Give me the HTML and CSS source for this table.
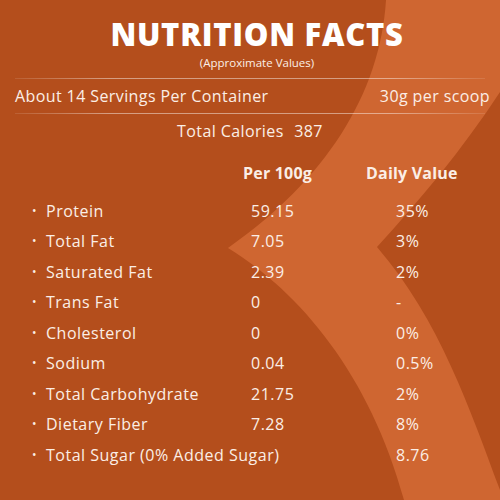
FILE: index.html
```html
<!DOCTYPE html>
<html lang="en">
<head>
    <meta charset="UTF-8">
    <meta name="viewport" content="width=device-width, initial-scale=1.0">
    <title>Nutrition Facts</title>
    <link rel="stylesheet" href="styles.css">
</head>
<body>
    <div class="card">
        <svg class="bg" width="500" height="500" viewBox="0 0 500 500">
            <path d="M386,0 C380,95 325,180 228,248 C300,292 370,375 404,500 L500,500 L500,490 C470,410 440,320 377,247 C420,200 462,150 500,92 L500,0 Z" fill="#cf6631"/>
        </svg>

        <div class="content">
            <div class="heading">
                <h1>NUTRITION FACTS</h1>
                <p class="subtitle">(Approximate Values)</p>
            </div>

            <div class="divider"></div>
            <div class="servings">
                <span>About 14 Servings Per Container</span>
                <span>30g per scoop</span>
            </div>
            <div class="divider short"></div>

            <p class="calories">Total Calories <span class="kcal">387</span></p>

            <div class="facts">
                <div class="head"></div>
                <div class="head">Per 100g</div>
                <div class="head dv">Daily Value</div>

                <div class="name">Protein</div><div>59.15</div><div>35%</div>
                <div class="name">Total Fat</div><div>7.05</div><div>3%</div>
                <div class="name">Saturated Fat</div><div>2.39</div><div>2%</div>
                <div class="name">Trans Fat</div><div>0</div><div>-</div>
                <div class="name">Cholesterol</div><div>0</div><div>0%</div>
                <div class="name">Sodium</div><div>0.04</div><div>0.5%</div>
                <div class="name">Total Carbohydrate</div><div>21.75</div><div>2%</div>
                <div class="name">Dietary Fiber</div><div>7.28</div><div>8%</div>
                <div class="name wide">Total Sugar (0% Added Sugar)</div><div>8.76</div>
            </div>
        </div>
    </div>
</body>
</html>
```

FILE: styles.css
```css
body {
    margin: 0;
    font-family: 'Open Sans', 'Noto Sans', sans-serif;
    color: #fbeee6;
}
.card {
    position: relative;
    width: 500px;
    height: 500px;
    overflow: hidden;
    background-color: #b44e1c; /* тёмный оранжевый фон */
}
.bg {
    position: absolute;
    top: 0;
    left: 0;
}
.content {
    position: relative;
    padding-top: 13px;
}
.heading {
    padding-left: 14px;
}
h1 {
    margin: 0;
    text-align: center;
    font-size: 31px;
    line-height: 42px;
    font-weight: 800;
    letter-spacing: 0.7px;
    color: #ffffff;
}
.subtitle {
    margin: 0;
    text-align: center;
    font-size: 11.5px;
    line-height: 15px;
}
.divider {
    height: 1px;
    margin: 8px 15px 0 15px;
    background: linear-gradient(to right, rgba(255,255,255,0.1), rgba(255,255,255,0.45) 20%, rgba(255,255,255,0.45) 80%, rgba(255,255,255,0.1));
}
.divider.short {
    margin: 0 15px 0 15px;
}
.servings {
    display: flex;
    justify-content: space-between;
    padding: 0 10px 0 15px;
    font-size: 16px;
    line-height: 34px;
    letter-spacing: 0.4px;
}
.calories {
    margin: 0;
    text-align: center;
    font-size: 16px;
    line-height: 34px;
    letter-spacing: 0.4px;
}
.kcal {
    margin-left: 6px;
}
.facts {
    display: grid;
    grid-template-columns: 205px 145px 1fr;
    padding-left: 46px;
    margin-top: 10px;
    font-size: 16px;
    line-height: 30.5px;
    letter-spacing: 0.5px;
}
.head {
    font-weight: 700;
    letter-spacing: 0.2px;
    margin-left: -8px;
    margin-bottom: 7px;
}
.head.dv {
    margin-left: -30px;
}
.name {
    position: relative;
}
.name::before {
    content: "•";
    position: absolute;
    left: -14px;
    font-size: 12px;
}
.wide {
    grid-column: span 2;
}
```
